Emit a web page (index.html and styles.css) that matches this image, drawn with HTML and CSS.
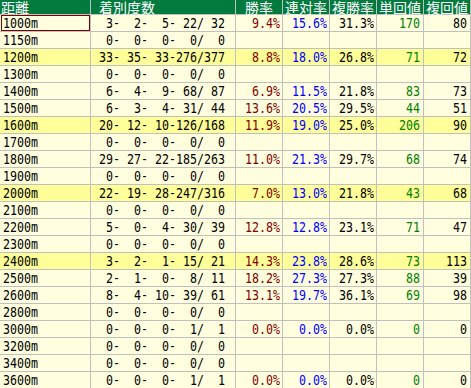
FILE: index.html
```html
<!DOCTYPE html>
<html lang="ja">
<head>
<meta charset="utf-8">
<title>距離別成績</title>
<link rel="stylesheet" href="styles.css">
</head>
<body>
<div class="grid">
  <div class="row head">
    <div class="c dist">距離</div><div class="c rec">着別度数</div><div class="c">勝率</div><div class="c">連対率</div><div class="c">複勝率</div><div class="c">単回値</div><div class="c">複回値</div>
  </div>
  <div class="row">
    <div class="c dist sel"><span>1000m</span></div><div class="c rec"><span>  3-  2-  5- 22/ 32</span></div><div class="c pct win"><span>9.4%</span></div><div class="c pct ren"><span>15.6%</span></div><div class="c pct"><span>31.3%</span></div><div class="c val tan"><span>170</span></div><div class="c val"><span>80</span></div>
  </div>
  <div class="row">
    <div class="c dist"><span>1150m</span></div><div class="c rec"><span>  0-  0-  0-  0/  0</span></div><div class="c"></div><div class="c"></div><div class="c"></div><div class="c"></div><div class="c"></div>
  </div>
  <div class="row hl">
    <div class="c dist"><span>1200m</span></div><div class="c rec"><span> 33- 35- 33-276/377</span></div><div class="c pct win"><span>8.8%</span></div><div class="c pct ren"><span>18.0%</span></div><div class="c pct"><span>26.8%</span></div><div class="c val tan"><span>71</span></div><div class="c val"><span>72</span></div>
  </div>
  <div class="row">
    <div class="c dist"><span>1300m</span></div><div class="c rec"><span>  0-  0-  0-  0/  0</span></div><div class="c"></div><div class="c"></div><div class="c"></div><div class="c"></div><div class="c"></div>
  </div>
  <div class="row">
    <div class="c dist"><span>1400m</span></div><div class="c rec"><span>  6-  4-  9- 68/ 87</span></div><div class="c pct win"><span>6.9%</span></div><div class="c pct ren"><span>11.5%</span></div><div class="c pct"><span>21.8%</span></div><div class="c val tan"><span>83</span></div><div class="c val"><span>73</span></div>
  </div>
  <div class="row">
    <div class="c dist"><span>1500m</span></div><div class="c rec"><span>  6-  3-  4- 31/ 44</span></div><div class="c pct win"><span>13.6%</span></div><div class="c pct ren"><span>20.5%</span></div><div class="c pct"><span>29.5%</span></div><div class="c val tan"><span>44</span></div><div class="c val"><span>51</span></div>
  </div>
  <div class="row hl">
    <div class="c dist"><span>1600m</span></div><div class="c rec"><span> 20- 12- 10-126/168</span></div><div class="c pct win"><span>11.9%</span></div><div class="c pct ren"><span>19.0%</span></div><div class="c pct"><span>25.0%</span></div><div class="c val tan"><span>206</span></div><div class="c val"><span>90</span></div>
  </div>
  <div class="row">
    <div class="c dist"><span>1700m</span></div><div class="c rec"><span>  0-  0-  0-  0/  0</span></div><div class="c"></div><div class="c"></div><div class="c"></div><div class="c"></div><div class="c"></div>
  </div>
  <div class="row">
    <div class="c dist"><span>1800m</span></div><div class="c rec"><span> 29- 27- 22-185/263</span></div><div class="c pct win"><span>11.0%</span></div><div class="c pct ren"><span>21.3%</span></div><div class="c pct"><span>29.7%</span></div><div class="c val tan"><span>68</span></div><div class="c val"><span>74</span></div>
  </div>
  <div class="row">
    <div class="c dist"><span>1900m</span></div><div class="c rec"><span>  0-  0-  0-  0/  0</span></div><div class="c"></div><div class="c"></div><div class="c"></div><div class="c"></div><div class="c"></div>
  </div>
  <div class="row hl">
    <div class="c dist"><span>2000m</span></div><div class="c rec"><span> 22- 19- 28-247/316</span></div><div class="c pct win"><span>7.0%</span></div><div class="c pct ren"><span>13.0%</span></div><div class="c pct"><span>21.8%</span></div><div class="c val tan"><span>43</span></div><div class="c val"><span>68</span></div>
  </div>
  <div class="row">
    <div class="c dist"><span>2100m</span></div><div class="c rec"><span>  0-  0-  0-  0/  0</span></div><div class="c"></div><div class="c"></div><div class="c"></div><div class="c"></div><div class="c"></div>
  </div>
  <div class="row">
    <div class="c dist"><span>2200m</span></div><div class="c rec"><span>  5-  0-  4- 30/ 39</span></div><div class="c pct win"><span>12.8%</span></div><div class="c pct ren"><span>12.8%</span></div><div class="c pct"><span>23.1%</span></div><div class="c val tan"><span>71</span></div><div class="c val"><span>47</span></div>
  </div>
  <div class="row">
    <div class="c dist"><span>2300m</span></div><div class="c rec"><span>  0-  0-  0-  0/  0</span></div><div class="c"></div><div class="c"></div><div class="c"></div><div class="c"></div><div class="c"></div>
  </div>
  <div class="row hl">
    <div class="c dist"><span>2400m</span></div><div class="c rec"><span>  3-  2-  1- 15/ 21</span></div><div class="c pct win"><span>14.3%</span></div><div class="c pct ren"><span>23.8%</span></div><div class="c pct"><span>28.6%</span></div><div class="c val tan"><span>73</span></div><div class="c val"><span>113</span></div>
  </div>
  <div class="row">
    <div class="c dist"><span>2500m</span></div><div class="c rec"><span>  2-  1-  0-  8/ 11</span></div><div class="c pct win"><span>18.2%</span></div><div class="c pct ren"><span>27.3%</span></div><div class="c pct"><span>27.3%</span></div><div class="c val tan"><span>88</span></div><div class="c val"><span>39</span></div>
  </div>
  <div class="row">
    <div class="c dist"><span>2600m</span></div><div class="c rec"><span>  8-  4- 10- 39/ 61</span></div><div class="c pct win"><span>13.1%</span></div><div class="c pct ren"><span>19.7%</span></div><div class="c pct"><span>36.1%</span></div><div class="c val tan"><span>69</span></div><div class="c val"><span>98</span></div>
  </div>
  <div class="row">
    <div class="c dist"><span>2800m</span></div><div class="c rec"><span>  0-  0-  0-  0/  0</span></div><div class="c"></div><div class="c"></div><div class="c"></div><div class="c"></div><div class="c"></div>
  </div>
  <div class="row">
    <div class="c dist"><span>3000m</span></div><div class="c rec"><span>  0-  0-  0-  1/  1</span></div><div class="c pct win"><span>0.0%</span></div><div class="c pct ren"><span>0.0%</span></div><div class="c pct"><span>0.0%</span></div><div class="c val tan"><span>0</span></div><div class="c val"><span>0</span></div>
  </div>
  <div class="row">
    <div class="c dist"><span>3200m</span></div><div class="c rec"><span>  0-  0-  0-  0/  0</span></div><div class="c"></div><div class="c"></div><div class="c"></div><div class="c"></div><div class="c"></div>
  </div>
  <div class="row">
    <div class="c dist"><span>3400m</span></div><div class="c rec"><span>  0-  0-  0-  0/  0</span></div><div class="c"></div><div class="c"></div><div class="c"></div><div class="c"></div><div class="c"></div>
  </div>
  <div class="row">
    <div class="c dist"><span>3600m</span></div><div class="c rec"><span>  0-  0-  0-  1/  1</span></div><div class="c pct win"><span>0.0%</span></div><div class="c pct ren"><span>0.0%</span></div><div class="c pct"><span>0.0%</span></div><div class="c val tan"><span>0</span></div><div class="c val"><span>0</span></div>
  </div>
</div>
</body>
</html>
```

FILE: styles.css
```css
html, body {
  margin: 0;
  padding: 0;
  background: #ffffe0;
}

.grid {
  display: grid;
  grid-template-columns: 90px 144px 46px 46px 46px 46px 46px;
  grid-template-rows: 14px;
  grid-auto-rows: 16px;
  column-gap: 1px;
  row-gap: 1px;
  width: 471px;
  padding-right: 1px;
  box-sizing: border-box;
  background: #c0c0c0;
  overflow: hidden;
  height: 388px;
}

.row {
  display: contents;
}

.c {
  background: #ffffe0;
  color: #000;
  font-family: "DejaVu Sans Mono", "Liberation Mono", monospace;
  font-size: 11.63px;
  line-height: 16px;
  white-space: pre;
  overflow: hidden;
  text-align: right;
}

.c > span {
  display: inline-block;
  transform: scaleY(1.18);
  transform-origin: 50% 55%;
}

.row.hl .c {
  background: #ffff99;
}

.row.head .c {
  background: #007a3d;
  color: #fff;
  font-family: "Noto Sans CJK JP", "Noto Sans", sans-serif;
  font-size: 14px;
  line-height: 14px;
  text-align: center;
  overflow: visible;
}

.row.head .c.dist {
  text-align: left;
  padding-left: 1px;
}

.row.head .c.rec {
  text-align: left;
  padding-left: 8px;
}

.dist {
  text-align: left;
  padding-left: 3px;
}

.sel {
  box-shadow: inset 1px 0 0 #ffffe0, inset 2px 0 0 #800000, inset 0 1px 0 #800000, inset -1px 0 0 #800000, inset 0 -1px 0 #800000;
}

.rec {
  text-align: left;
  padding-left: 1px;
}

.pct {
  padding-right: 2px;
}

.val {
  padding-right: 3px;
}

.win {
  color: #800000;
}

.ren {
  color: #0000ff;
}

.tan {
  color: #008000;
}
```
